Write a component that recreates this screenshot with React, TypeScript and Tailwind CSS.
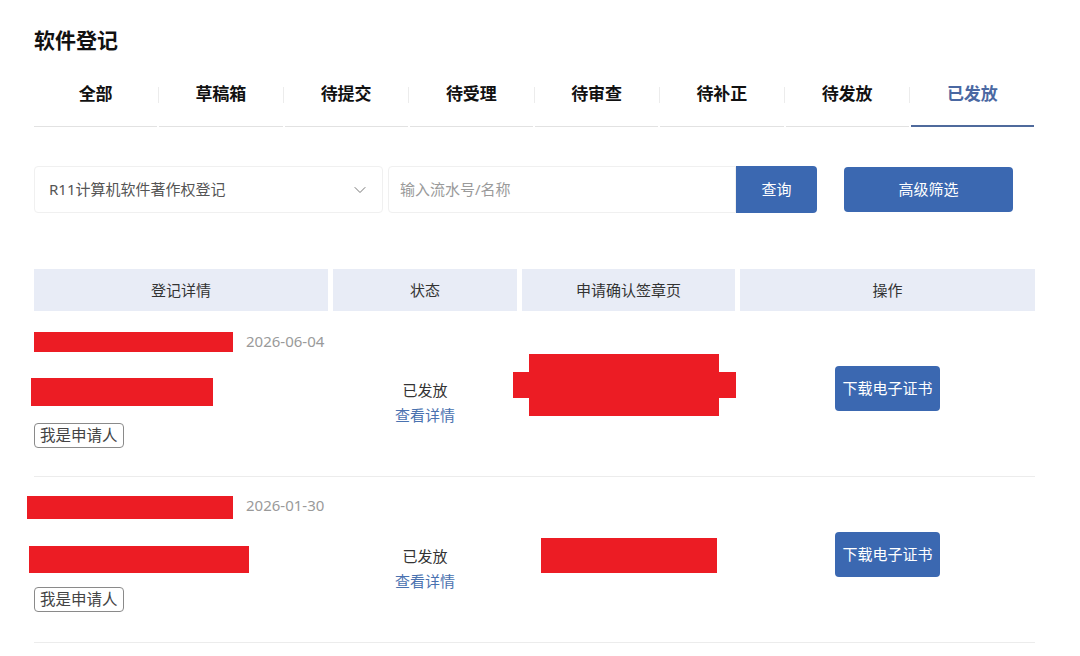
import React, { useState } from "react";
import { ChevronDown } from "lucide-react";

const tabs = ["全部", "草稿箱", "待提交", "待受理", "待审查", "待补正", "待发放", "已发放"];

interface Record {
  date: string;
  // 打码条的位置
  nameBar: string;
  codeBar: string;
  tagGap: string;
  rowTop: string;
  stamp: React.ReactNode;
}

const records: Record[] = [
  {
    date: "2026-06-04",
    rowTop: "pt-[21px]",
    nameBar: "w-[199px] h-[20px]",
    codeBar: "ml-[-3px] mt-[26px] w-[182px] h-[28px]",
    tagGap: "mt-[17px]",
    stamp: (
      <div className="relative mb-[17px] ml-[-8px] flex h-[62px] w-[223px] items-center justify-center">
        <div className="h-[26px] w-[223px] bg-[#ec1c24]" />
        <div className="absolute left-[16px] top-0 h-[62px] w-[190px] bg-[#ec1c24]" />
      </div>
    ),
  },
  {
    date: "2026-01-30",
    rowTop: "pt-[19px]",
    nameBar: "ml-[-7px] w-[206px] h-[23px]",
    codeBar: "ml-[-5px] mt-[27px] w-[220px] h-[27px]",
    tagGap: "mt-[14px]",
    stamp: <div className="mb-[9px] h-[35px] w-[176px] bg-[#ec1c24]" />,
  },
];

const App: React.FC = () => {
  const [active, setActive] = useState(7);
  const [keyword, setKeyword] = useState("");

  return (
    <div
      className="min-h-[656px] w-[1080px] bg-white pl-[34px] pt-[26px] text-[#333]"
      style={{ fontFamily: '"Noto Sans", "Noto Sans CJK SC", sans-serif' }}
    >
      {/* 标题 */}
      <h1 className="text-[21px] font-bold leading-[28px] text-[#111]">软件登记</h1>

      {/* 状态页签 */}
      <div className="mt-[8px] flex h-[65px] w-[1000px]">
        {tabs.map((t, i) => (
          <React.Fragment key={t}>
            {i > 0 && (
              <div className="flex h-full w-[2px] items-center justify-center">
                <div className="h-[16px] w-px bg-[#ececec]" />
              </div>
            )}
            <button
              onClick={() => setActive(i)}
              className={
                i === active
                  ? "flex h-full flex-1 items-center justify-center border-b-2 border-[#4f6a9c] pt-px text-[17px] font-bold text-[#4a68a2]"
                  : "flex h-full flex-1 items-center justify-center border-b border-[#e2e2e2] text-[17px] font-bold text-[#111]"
              }
            >
              {t}
            </button>
          </React.Fragment>
        ))}
      </div>

      {/* 筛选 */}
      <div className="mt-[39px] flex h-[47px] items-stretch">
        <div className="flex w-[349px] items-center justify-between rounded-[4px] border border-[#f0f0f0] pl-[14px] pr-[12px] text-[15px] text-[#555]">
          <span>R11计算机软件著作权登记</span>
          <ChevronDown size={20} strokeWidth={1.2} className="text-[#777]" />
        </div>
        <div className="ml-[5px] flex w-[348px] items-center rounded-l-[4px] border border-[#f0f0f0] px-[11px]">
          <input
            value={keyword}
            onChange={(e) => setKeyword(e.target.value)}
            placeholder="输入流水号/名称"
            className="w-full bg-transparent text-[15px] outline-none placeholder:text-[#9a9a9a]"
          />
        </div>
        <button className="w-[81px] rounded-r-[4px] bg-[#3b68b1] text-[15px] text-white">查询</button>
        <button className="my-px ml-[27px] w-[169px] rounded-[4px] bg-[#3b68b1] text-[15px] text-white">
          高级筛选
        </button>
      </div>

      {/* 表头 */}
      <div className="mt-[56px] grid h-[42px] w-[1001px] grid-cols-[294px_184px_213px_295px] gap-x-[5px] text-[15px] text-[#333]">
        <div className="flex items-center justify-center bg-[#e8ecf6]">登记详情</div>
        <div className="flex items-center justify-center bg-[#e8ecf6]">状态</div>
        <div className="flex items-center justify-center bg-[#e8ecf6]">申请确认签章页</div>
        <div className="flex items-center justify-center bg-[#e8ecf6]">操作</div>
      </div>

      {/* 列表 */}
      {records.map((r) => (
        <div
          key={r.date}
          className="grid h-[166px] w-[1001px] grid-cols-[294px_184px_213px_295px] gap-x-[5px] border-b border-[#ececec]"
        >
          <div className={`flex flex-col items-start ${r.rowTop}`}>
            <div className="flex items-start">
              <div className={`bg-[#ec1c24] ${r.nameBar}`} />
              <span className="ml-[13px] text-[15px] leading-[18px] text-[#9a9a9a]">{r.date}</span>
            </div>
            <div className={`bg-[#ec1c24] ${r.codeBar}`} />
            <span
              className={`${r.tagGap} rounded-[4px] border border-[#8a8a8a] px-[5px] text-[15.5px] leading-[23px] text-[#444]`}
            >
              我是申请人
            </span>
          </div>
          <div className="flex flex-col items-center justify-center pt-[18px] text-[15px] leading-[25px]">
            <span className="text-[#333]">已发放</span>
            <a className="cursor-pointer text-[#4a72b0]">查看详情</a>
          </div>
          <div className="flex items-center justify-center">{r.stamp}</div>
          <div className="flex items-center justify-center pb-[10px]">
            <button className="h-[45px] w-[105px] rounded-[4px] bg-[#3b68b1] text-[15px] text-white">
              下载电子证书
            </button>
          </div>
        </div>
      ))}
    </div>
  );
};

export default App;
